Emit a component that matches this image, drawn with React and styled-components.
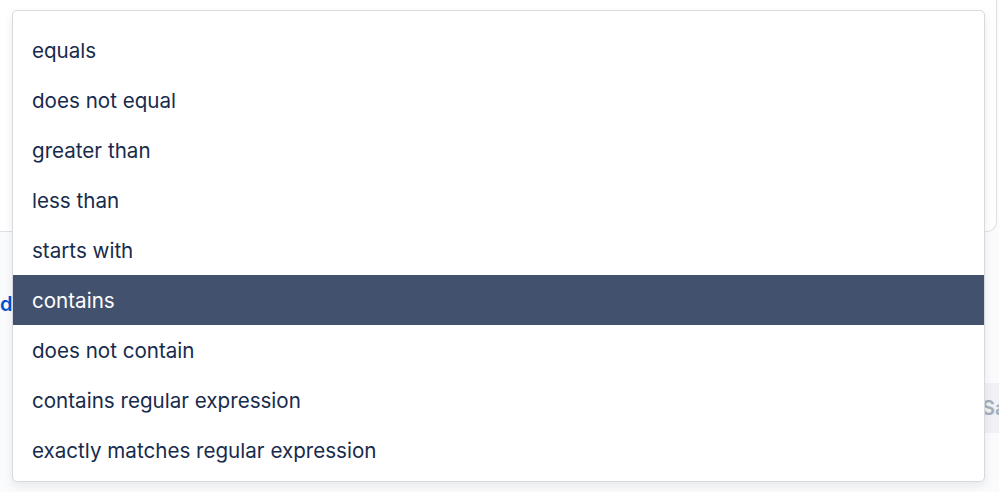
import React from 'react';
import styled, { createGlobalStyle } from 'styled-components';

const GlobalStyle = createGlobalStyle`
  html, body {
    margin: 0;
    padding: 0;
    background: #fafbfc;
    font-family: Inter, "Liberation Sans", sans-serif;
    -webkit-font-smoothing: antialiased;
  }
`;

const Page = styled.div`
  position: relative;
  width: 999px;
  height: 492px;
  overflow: hidden;
`;

const BackCard = styled.div`
  height: 232px;
  margin: 0 2px 0 -20px;
  border: 1px solid #dfe1e6;
  border-top: none;
  border-radius: 0 0 10px 10px;
  background: #ffffff;
  box-sizing: border-box;
`;

const BackRow = styled.div`
  display: flex;
  align-items: center;
  margin-top: 56px;
  font-size: 20px;
  font-weight: 600;
  color: #0052cc;
  height: 32px;
`;

const BackButtonRow = styled.div`
  display: flex;
  justify-content: flex-end;
  margin-top: 63px;
`;

const BackButton = styled.div`
  width: 100px;
  height: 50px;
  margin-right: -80px;
  background: #f0f1f4;
  color: #a5adba;
  font-size: 20px;
  font-weight: 600;
  display: flex;
  align-items: center;
  padding-left: 3px;
  box-sizing: border-box;
  border-radius: 4px;
  white-space: nowrap;
`;

const Menu = styled.ul`
  position: absolute;
  left: 12px;
  top: 10px;
  width: 973px;
  height: 472px;
  margin: 0;
  padding: 14px 0 7px;
  list-style: none;
  box-sizing: border-box;
  background: #ffffff;
  border: 1px solid #d7d9de;
  border-radius: 5px;
  box-shadow: 0 4px 10px rgba(9, 30, 66, 0.08);
  overflow: hidden;
`;

const Item = styled.li`
  height: 50px;
  display: flex;
  align-items: center;
  padding-left: 19px;
  font-size: 20.6px;
  color: ${p => (p.$active ? '#ffffff' : '#172b4d')};
  background: ${p => (p.$active ? '#42526e' : 'transparent')};
`;

const options = [
  'equals',
  'does not equal',
  'greater than',
  'less than',
  'starts with',
  'contains',
  'does not contain',
  'contains regular expression',
  'exactly matches regular expression',
];

const App = () => {
  return (
    <Page>
      <GlobalStyle />
      <BackCard />
      <BackRow>d</BackRow>
      <BackButtonRow>
        <BackButton>Save</BackButton>
      </BackButtonRow>
      <Menu>
        {options.map(o => (
          <Item key={o} $active={o === 'contains'}>{o}</Item>
        ))}
      </Menu>
    </Page>
  );
};

export default App;
